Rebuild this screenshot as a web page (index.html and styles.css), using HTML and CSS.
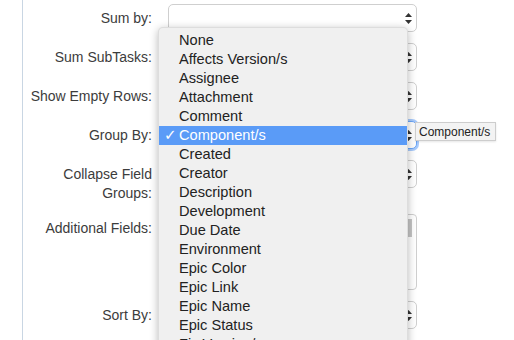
FILE: index.html
```html
<!DOCTYPE html>
<html>
<head>
<meta charset="utf-8">
<link rel="stylesheet" href="styles.css">
</head>
<body>
<div class="panel">
  <form class="form">
    <div class="label">Sum by:</div>
    <div class="select"><span class="arrows"><svg width="7" height="11" viewBox="0 0 7 11"><path d="M3.5 0L7 4H0Z M3.5 11L7 7H0Z" fill="#333"/></svg></span></div>

    <div class="label">Sum SubTasks:</div>
    <div class="select"><span class="arrows"><svg width="7" height="11" viewBox="0 0 7 11"><path d="M3.5 0L7 4H0Z M3.5 11L7 7H0Z" fill="#333"/></svg></span></div>

    <div class="label">Show Empty Rows:</div>
    <div class="select"><span class="arrows"><svg width="7" height="11" viewBox="0 0 7 11"><path d="M3.5 0L7 4H0Z M3.5 11L7 7H0Z" fill="#333"/></svg></span></div>

    <div class="label">Group By:</div>
    <div class="select focused"><span class="arrows"><svg width="7" height="11" viewBox="0 0 7 11"><path d="M3.5 0L7 4H0Z M3.5 11L7 7H0Z" fill="#333"/></svg></span></div>

    <div class="label">Collapse Field<br>Groups:</div>
    <div class="select"><span class="arrows"><svg width="7" height="11" viewBox="0 0 7 11"><path d="M3.5 0L7 4H0Z M3.5 11L7 7H0Z" fill="#333"/></svg></span></div>

    <div class="label">Additional Fields:</div>
    <div class="multi"><span class="thumb"></span></div>

    <div class="label">Sort By:</div>
    <div class="select"><span class="arrows"><svg width="7" height="11" viewBox="0 0 7 11"><path d="M3.5 0L7 4H0Z M3.5 11L7 7H0Z" fill="#333"/></svg></span></div>

    <div class="label"></div>
    <div class="select"></div>
  </form>
</div>

<ul class="menu">
  <li>None</li>
  <li>Affects Version/s</li>
  <li>Assignee</li>
  <li>Attachment</li>
  <li>Comment</li>
  <li class="active"><span class="check">✓</span>Component/s</li>
  <li>Created</li>
  <li>Creator</li>
  <li>Description</li>
  <li>Development</li>
  <li>Due Date</li>
  <li>Environment</li>
  <li>Epic Color</li>
  <li>Epic Link</li>
  <li>Epic Name</li>
  <li>Epic Status</li>
  <li>Fix Version/s</li>
</ul>

<div class="tooltip">Component/s</div>
</body>
</html>
```

FILE: styles.css
```css
html, body {
  margin: 0;
  padding: 0;
  background: #fff;
  height: 340px;
  overflow: hidden;
  font-family: "Liberation Sans", Arial, sans-serif;
}

.panel {
  margin-left: 22px;
  border-left: 1px solid #c9d6e3;
  height: 340px;
  padding-top: 4px;
  box-sizing: border-box;
}

.form {
  display: grid;
  grid-template-columns: 129px 249px;
  column-gap: 16px;
  row-gap: 11px;
  align-items: start;
  margin: 0;
}

.label {
  text-align: right;
  font-size: 14px;
  line-height: 19px;
  padding-top: 5px;
  color: #3c3c3c;
}

.select {
  position: relative;
  height: 28px;
  box-sizing: border-box;
  border: 1px solid #cfcfcf;
  border-radius: 5px;
  background: #fff;
}

.select.focused {
  border-color: #6aa6f8;
  box-shadow: 0 0 0 2px rgba(96, 158, 248, 0.55);
}

.arrows {
  position: absolute;
  right: 4px;
  top: 8px;
  display: flex;
}

.multi {
  position: relative;
  height: 76px;
  box-sizing: border-box;
  border: 1px solid #cfcfcf;
  border-radius: 4px;
  background: #fff;
}

.thumb {
  position: absolute;
  right: 4px;
  top: 4px;
  width: 4px;
  height: 18px;
  background: #c4c4c4;
}

.menu {
  position: absolute;
  left: 158px;
  top: 27px;
  width: 250px;
  height: 330px;
  margin: 0;
  padding: 3px 0 0;
  list-style: none;
  box-sizing: border-box;
  overflow: hidden;
  background: #f0f0f0;
  border: 1px solid rgba(0, 0, 0, 0.08);
  border-radius: 5px;
  box-shadow: 0 2px 9px rgba(0, 0, 0, 0.28);
}

.menu li {
  position: relative;
  height: 19px;
  line-height: 19px;
  padding-left: 20px;
  font-size: 14.6px;
  color: #222;
  white-space: nowrap;
}

.menu li.active {
  background: #5a9bf7;
  color: #fff;
}

.check {
  position: absolute;
  left: 5px;
  top: 0;
  font-size: 15px;
  font-family: "DejaVu Sans", sans-serif;
}

.tooltip {
  position: absolute;
  left: 415px;
  top: 122px;
  height: 19px;
  line-height: 18px;
  padding: 0 5px 0 3px;
  box-sizing: border-box;
  font-size: 12px;
  color: #222;
  background: #f3f3f3;
  border: 1px solid #cdcdcd;
  box-shadow: 0 1px 2px rgba(0, 0, 0, 0.1);
}
```
